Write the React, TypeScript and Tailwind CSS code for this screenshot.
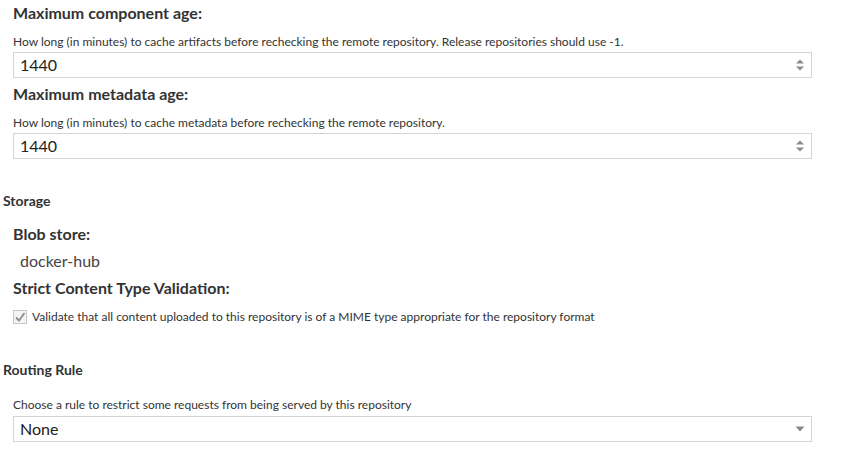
import React from "react";

function Spinner() {
  return (
    <svg width="10" height="14" viewBox="0 0 10 14" className="text-[#8a8a8a]">
      <path d="M1 5.5 L5 1.5 L9 5.5 Z" fill="currentColor" />
      <path d="M1 8.5 L5 12.5 L9 8.5 Z" fill="currentColor" />
    </svg>
  );
}

function Caret() {
  return (
    <svg width="10" height="6" viewBox="0 0 10 6" className="text-[#8a8a8a]">
      <path d="M0.5 0.5 L9.5 0.5 L5 5.5 Z" fill="currentColor" />
    </svg>
  );
}

function Field({ label, help, value }: { label: string; help: string; value: string }) {
  return (
    <div className="pl-[13px] pr-[42px]">
      <div className="h-[29px] pt-[1px] text-[16px] font-bold text-[#333]">{label}</div>
      <div className="h-[23px] pt-[4px] text-[12px] text-[#333]">{help}</div>
      <div className="h-[26px] flex items-center justify-between border border-[#d4d4d4] bg-white pl-[6px] pr-[6px]">
        <span className="text-[16px] text-[#222]">{value}</span>
        <Spinner />
      </div>
    </div>
  );
}

export default function App() {
  return (
    <div className="w-[854px] h-[463px] overflow-hidden bg-white font-['Lato',sans-serif] text-[#333]">
      <Field
        label="Maximum component age:"
        help="How long (in minutes) to cache artifacts before rechecking the remote repository. Release repositories should use -1."
        value="1440"
      />
      <div className="h-[3px]" />
      <Field
        label="Maximum metadata age:"
        help="How long (in minutes) to cache metadata before rechecking the remote repository."
        value="1440"
      />

      {/* storage */}
      <div className="pl-[3px] pt-[31px] h-[62px] text-[14px] font-bold text-[#333]">Storage</div>
      <div className="pl-[13px]">
        <div className="h-[26px] text-[16px] font-bold text-[#333] leading-[26px]">Blob store:</div>
        <div className="h-[27px] pl-[7px] text-[16px] text-[#444] leading-[27px]">docker-hub</div>
        <div className="h-[28px] text-[16px] font-bold text-[#333] leading-[28px]">Strict Content Type Validation:</div>
        <label className="flex items-center gap-[5px] mt-[4px] h-[22px] text-[12px] text-[#333]">
          <span className="w-[14px] h-[14px] border border-[#c8c8c8] bg-[#f4f4f4] flex items-center justify-center">
            <svg width="12" height="12" viewBox="0 0 12 12">
              <path d="M2 6.5 L5 9.5 L10.5 2" fill="none" stroke="#8d8d8d" strokeWidth="1.8" />
            </svg>
          </span>
          Validate that all content uploaded to this repository is of a MIME type appropriate for the repository format
        </label>
      </div>

      {/* routing */}
      <div className="pl-[3px] pt-[31px] h-[64px] text-[14px] font-bold text-[#333]">Routing Rule</div>
      <div className="pl-[13px] pr-[42px]">
        <div className="h-[24px] pt-[4px] text-[12px] text-[#333]">Choose a rule to restrict some requests from being served by this repository</div>
        <div className="h-[26px] flex items-center justify-between border border-[#d4d4d4] bg-white pl-[6px] pr-[6px]">
          <span className="text-[16px] text-[#222]">None</span>
          <Caret />
        </div>
      </div>
    </div>
  );
}
